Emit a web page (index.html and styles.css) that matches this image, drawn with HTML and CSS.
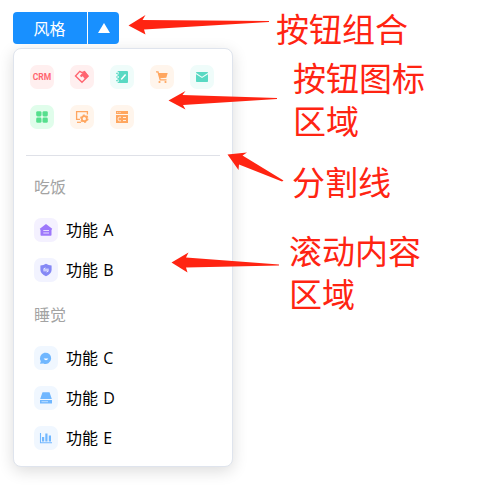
FILE: index.html
```html
<!DOCTYPE html>
<html lang="zh-CN">
<head>
<meta charset="utf-8">
<title>风格</title>
<link rel="stylesheet" href="styles.css">
</head>
<body>
<main class="widget">
  <div class="button-group">
    <button class="btn btn-label">风格</button>
    <button class="btn btn-toggle" aria-label="展开"><svg width="12" height="10" viewBox="0 0 12 10"><path d="M6 0L12 10H0Z" fill="#fff"/></svg></button>
  </div>
  <section class="panel">
    <div class="icon-grid">
      <span class="tile red crm">CRM</span>
      <span class="tile red"><svg viewBox="0 0 24 24"><path d="M12 7.6L9.8 6.3L5.5 11L12 17.3L18 11.2L14.5 6.7Z" fill="none" stroke="currentColor" stroke-width="1.4"/><path d="M10 10.5L14.5 6L18.8 11L15.2 14.4L12.8 11.3L11 12.2Z" fill="currentColor"/></svg></span>
      <span class="tile teal"><svg viewBox="0 0 24 24"><rect x="7.5" y="6" width="10.5" height="12" rx="1" fill="currentColor"/><path d="M6 8.3H9M6 12H9M6 15.7H9" stroke="#effcfa" stroke-width="2"/><path d="M6 8.3H8.5M6 12H8.5M6 15.7H8.5" stroke="currentColor"/><path d="M11.2 14.5L15.6 9.5" stroke="#fff" stroke-width="1.5"/></svg></span>
      <span class="tile orange"><svg viewBox="0 0 24 24"><path d="M6 6.8H8L10.2 14.8H16.5" fill="none" stroke="currentColor" stroke-width="1.3"/><path d="M8.3 8H17.7L16.3 12.7L9.7 13.2Z" fill="currentColor"/><circle cx="9.5" cy="17" r="1.1" fill="currentColor"/><circle cx="15.5" cy="17" r="1.1" fill="currentColor"/></svg></span>
      <span class="tile teal"><svg viewBox="0 0 24 24"><rect x="6" y="7" width="12" height="10" rx=".7" fill="currentColor"/><path d="M6 8.5L12 12.4L18 8.5" fill="none" stroke="#effcfa" stroke-width="1.1"/></svg></span>
      <span class="tile green"><svg viewBox="0 0 24 24" fill="currentColor"><rect x="6.2" y="6.2" width="5.3" height="5.3" rx="1.4"/><rect x="12.5" y="6.2" width="5.3" height="5.3" rx="1.4"/><rect x="6.2" y="12.5" width="5.3" height="5.3" rx="1.4"/><rect x="12.5" y="12.5" width="5.3" height="5.3" rx="1.4"/></svg></span>
      <span class="tile orange"><svg viewBox="0 0 24 24" fill="none" stroke="currentColor"><path d="M10 14.4H6.6V6.7H17.4V9.5" stroke-width="1.3"/><path d="M7 17.3H11" stroke-width="1.2"/><circle cx="14.3" cy="13.7" r="2.5" stroke-width="1.7"/><circle cx="14.3" cy="13.7" r="3.6" stroke-width="1.3" stroke-dasharray="1.9 1.87"/></svg></span>
      <span class="tile orange"><svg viewBox="0 0 24 24"><path d="M6 6H18V9H6ZM6 10H18V18H6Z" fill="currentColor"/><path d="M11 12.2H9.2Q8.2 12.2 8.2 13.2V14.8Q8.2 15.8 9.2 15.8H11M13 12.5H16M13 15.5H16" fill="none" stroke="#fff5ec" stroke-width=".9"/><path d="M7.3 7.5H8.3M9.5 7.5H10.5" stroke="#fff5ec" stroke-width=".8"/></svg></span>
    </div>
    <div class="divider"></div>
    <div class="scroll-area">
      <h2 class="group-title">吃饭</h2>
      <div class="item"><span class="tile purple"><svg viewBox="0 0 24 24"><path d="M12 6L18.2 10.8L17.5 12V17Q17.5 17.8 16.7 17.8H7.3Q6.5 17.8 6.5 17V12L5.8 10.8Z" fill="currentColor"/><path d="M9.3 12.5H15M9.3 15H15" stroke="#e6dcff" stroke-width="1"/></svg></span>功能 A</div>
      <div class="item"><span class="tile indigo"><svg viewBox="0 0 24 24"><path d="M12 5.8Q14.5 7.3 17.6 7.5V12Q17.3 16 12 18.3Q6.7 16 6.4 12V7.5Q9.5 7.3 12 5.8Z" fill="currentColor"/><path d="M14.8 11.2H9.5L11.3 9.8M9.3 12.8H14.5L12.7 14.2" fill="none" stroke="#f2f3ff" stroke-width=".9"/></svg></span>功能 B</div>
      <h2 class="group-title">睡觉</h2>
      <div class="item"><span class="tile blue"><svg viewBox="0 0 24 24"><path d="M6 17.8L6.8 15.2A5.6 5.6 0 1 1 9.3 17.4Z" fill="currentColor"/><path d="M9.6 12.6Q12 16.1 14.4 12.6Z" fill="#fff"/></svg></span>功能 C</div>
      <div class="item"><span class="tile blue"><svg viewBox="0 0 24 24"><path d="M8.5 6.3H15.5L17.8 13H6.2ZM6 14H18V17.5H6Z" fill="currentColor"/><path d="M7.5 15.7H14" stroke="#cfe7ff" stroke-width=".8"/></svg></span>功能 D</div>
      <div class="item"><span class="tile blue"><svg viewBox="0 0 24 24"><path d="M6.5 7V16.8H18" fill="none" stroke="currentColor" stroke-width="1.1"/><path d="M8 11H10.2V15.5H8ZM11.3 7.4H13.5V15.5H11.3ZM14.8 9.5H17V15.5H14.8Z" fill="currentColor"/></svg></span>功能 E</div>
    </div>
  </section>
</main>
<svg class="arrows" width="479" height="492" viewBox="0 0 479 492" fill="#ff2412">
  <path d="M128.5 25.5L145.5 15L142.5 20L269 21V22L144 29.5L145.5 34.5Z"/>
  <path d="M168.5 100.5L185.5 91L182.5 95L277 98V99L183 105L185.5 109.5Z"/>
  <path d="M227.5 154.5L247 152.5L242.5 155.5L283.5 180.5L282 181.5L239 164.5L238.5 170Z"/>
  <path d="M171.5 262.5L188.5 252.5L186 257.5L279 264.5V265.5L186 267.5L187.5 272.5Z"/>
</svg>
<p class="note note-buttons">按钮组合</p>
<p class="note note-icons">按钮图标<br>区域</p>
<p class="note note-divider">分割线</p>
<p class="note note-scroll">滚动内容<br>区域</p>
</body>
</html>
```
FILE: styles.css
```css
* { box-sizing: border-box; }
body {
  margin: 0;
  height: 492px;
  overflow: hidden;
  background: #fff;
  color: #000;
  font: 16px/24px "Open Sans", "Noto Sans CJK SC", sans-serif;
}
.widget { width: 220px; margin-left: 13px; padding-top: 12px; }
.button-group { display: flex; gap: 1px; height: 32px; }
.btn {
  display: flex;
  align-items: center;
  justify-content: center;
  border: 0;
  padding: 0;
  background: #1890ff;
  color: #fff;
  font: inherit;
}
.btn-label { width: 74px; border-radius: 4px 0 0 4px; padding: 2px 1px 0 0; }
.btn-toggle { width: 31px; border-radius: 0 4px 4px 0; }
.panel {
  height: 419px;
  margin-top: 4px;
  border: 1px solid #dfe4ed;
  border-radius: 8px;
  background: #fff;
  box-shadow: 0 4px 16px rgba(0, 0, 0, .14);
}
.icon-grid {
  display: grid;
  grid-template-columns: repeat(5, 24px);
  gap: 16px;
  padding: 16px;
}
.tile { display: block; flex: none; width: 24px; height: 24px; border-radius: 7px; }
.tile svg { display: block; width: 24px; height: 24px; }
.crm {
  font: 700 8.5px/24px Roboto, sans-serif;
  text-align: center;
}
.red { color: #ff6570; background: #ffefef; }
.teal { color: #59d9c3; background: #effcfa; }
.orange { color: #ffa65f; background: #fff5ec; }
.green { color: #55df8d; background: #e0fdeb; }
.purple { color: #9d78fb; background: #f4f1ff; }
.indigo { color: #8588f5; background: #f2f3ff; }
.blue { color: #70b7ff; background: #f0f7ff; }
.divider { height: 1px; margin: 10px 12px 0; background: #dfe1e8; }
.scroll-area { padding: 6px 20px 0; }
.group-title {
  height: 48px;
  margin: 0;
  color: #a3a3a3;
  font-size: 16px;
  font-weight: 400;
  line-height: 50px;
}
.item { display: flex; align-items: center; gap: 8px; height: 40px; word-spacing: 1px; }
.arrows { position: absolute; top: 0; left: 0; }
.note {
  position: absolute;
  margin: 0;
  color: #ff2412;
  font: 33px/43px "Noto Sans CJK SC", sans-serif;
  white-space: nowrap;
}
.note-buttons { left: 276px; top: 7px; }
.note-icons { left: 293px; top: 56px; }
.note-divider { left: 292px; top: 160px; }
.note-scroll { left: 289px; top: 229px; }
```
